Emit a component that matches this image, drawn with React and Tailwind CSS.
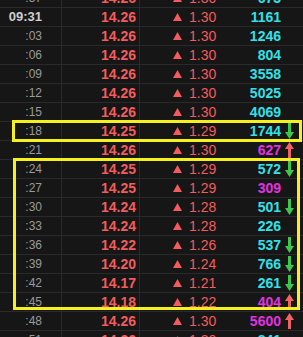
import React from 'react'

const rows = [
  { t: ':57', p: '14.26', c: '1.30', v: '673', vc: 'cyan' },
  { t: '09:31', p: '14.26', c: '1.30', v: '1161', vc: 'cyan', main: true },
  { t: ':03', p: '14.26', c: '1.30', v: '1246', vc: 'cyan' },
  { t: ':06', p: '14.26', c: '1.30', v: '804', vc: 'cyan' },
  { t: ':09', p: '14.26', c: '1.30', v: '3558', vc: 'cyan' },
  { t: ':12', p: '14.26', c: '1.30', v: '5025', vc: 'cyan' },
  { t: ':15', p: '14.26', c: '1.30', v: '4069', vc: 'cyan' },
  { t: ':18', p: '14.25', c: '1.29', v: '1744', vc: 'cyan', arrow: 'down' },
  { t: ':21', p: '14.26', c: '1.30', v: '627', vc: 'magenta', arrow: 'up' },
  { t: ':24', p: '14.25', c: '1.29', v: '572', vc: 'cyan', arrow: 'down' },
  { t: ':27', p: '14.25', c: '1.29', v: '309', vc: 'magenta' },
  { t: ':30', p: '14.24', c: '1.28', v: '501', vc: 'cyan', arrow: 'down' },
  { t: ':33', p: '14.24', c: '1.28', v: '226', vc: 'cyan' },
  { t: ':36', p: '14.22', c: '1.26', v: '537', vc: 'cyan', arrow: 'down' },
  { t: ':39', p: '14.20', c: '1.24', v: '766', vc: 'cyan', arrow: 'down' },
  { t: ':42', p: '14.17', c: '1.21', v: '261', vc: 'cyan', arrow: 'down' },
  { t: ':45', p: '14.18', c: '1.22', v: '404', vc: 'magenta', arrow: 'up' },
  { t: ':48', p: '14.26', c: '1.30', v: '5600', vc: 'magenta', arrow: 'up' },
  { t: ':51', p: '14.26', c: '1.30', v: '841', vc: 'cyan' },
]

function Triangle() {
  return (
    <svg width="9" height="8" viewBox="0 0 9 8" className="shrink-0">
      <polygon points="4.5,0 9,8 0,8" fill="#f25c5c" />
    </svg>
  )
}

function Arrow({ dir }) {
  if (dir === 'down') {
    return (
      <svg width="9" height="16" viewBox="0 0 9 16">
        <rect x="3" y="0" width="3" height="10" fill="#3cc84a" />
        <polygon points="0,9 9,9 4.5,16" fill="#3cc84a" />
      </svg>
    )
  }
  return (
    <svg width="9" height="16" viewBox="0 0 9 16">
      <polygon points="4.5,0 9,7 0,7" fill="#f26464" />
      <rect x="3" y="6" width="3" height="10" fill="#f26464" />
    </svg>
  )
}

export default function App() {
  return (
    <div
      className="relative w-[303px] h-[337px] overflow-hidden bg-[#161616]"
      style={{ fontFamily: '"Liberation Sans", Arial, sans-serif' }}
    >
      <div className="-mt-[11px]">
        {rows.map((r, i) => (
          <div key={i} className="flex h-[19px] items-center border-b border-[#2a2a2a]">
            <div className="w-[62px] h-full flex items-center justify-end pr-[19px] border-r border-[#2a2a2a]">
              {r.main ? (
                <span className="text-[13px] font-bold text-[#cfcfcf]">{r.t}</span>
              ) : (
                <span className="text-[12px] text-[#9a9a9a]">{r.t}</span>
              )}
            </div>
            <div className="w-[78px] h-full flex items-center justify-end pr-[3px] border-r border-[#2a2a2a]">
              <span className="text-[14px] font-bold text-[#f25c5c]">{r.p}</span>
            </div>
            <div className="w-[94px] h-full flex items-center pl-[33px] gap-[7px]">
              <Triangle />
              <span className="text-[14px] text-[#f25c5c]">{r.c}</span>
            </div>
            <div className="w-[47px] h-full flex items-center justify-end">
              <span
                className={
                  r.vc === 'cyan'
                    ? 'text-[14px] font-bold text-[#33e0e8]'
                    : 'text-[14px] font-bold text-[#e033e0]'
                }
              >
                {r.v}
              </span>
            </div>
            <div className="w-[22px] h-full flex items-center pl-[4px]">
              {r.arrow && <Arrow dir={r.arrow} />}
            </div>
          </div>
        ))}
      </div>

      {/* highlight boxes */}
      <div className="absolute left-[12px] top-[120px] w-[290px] h-[22px] border-[3px] border-[#f5f01e]" />
      <div className="absolute left-[13px] top-[158px] w-[287px] h-[152px] border-[3px] border-[#f5f01e]" />
    </div>
  )
}
